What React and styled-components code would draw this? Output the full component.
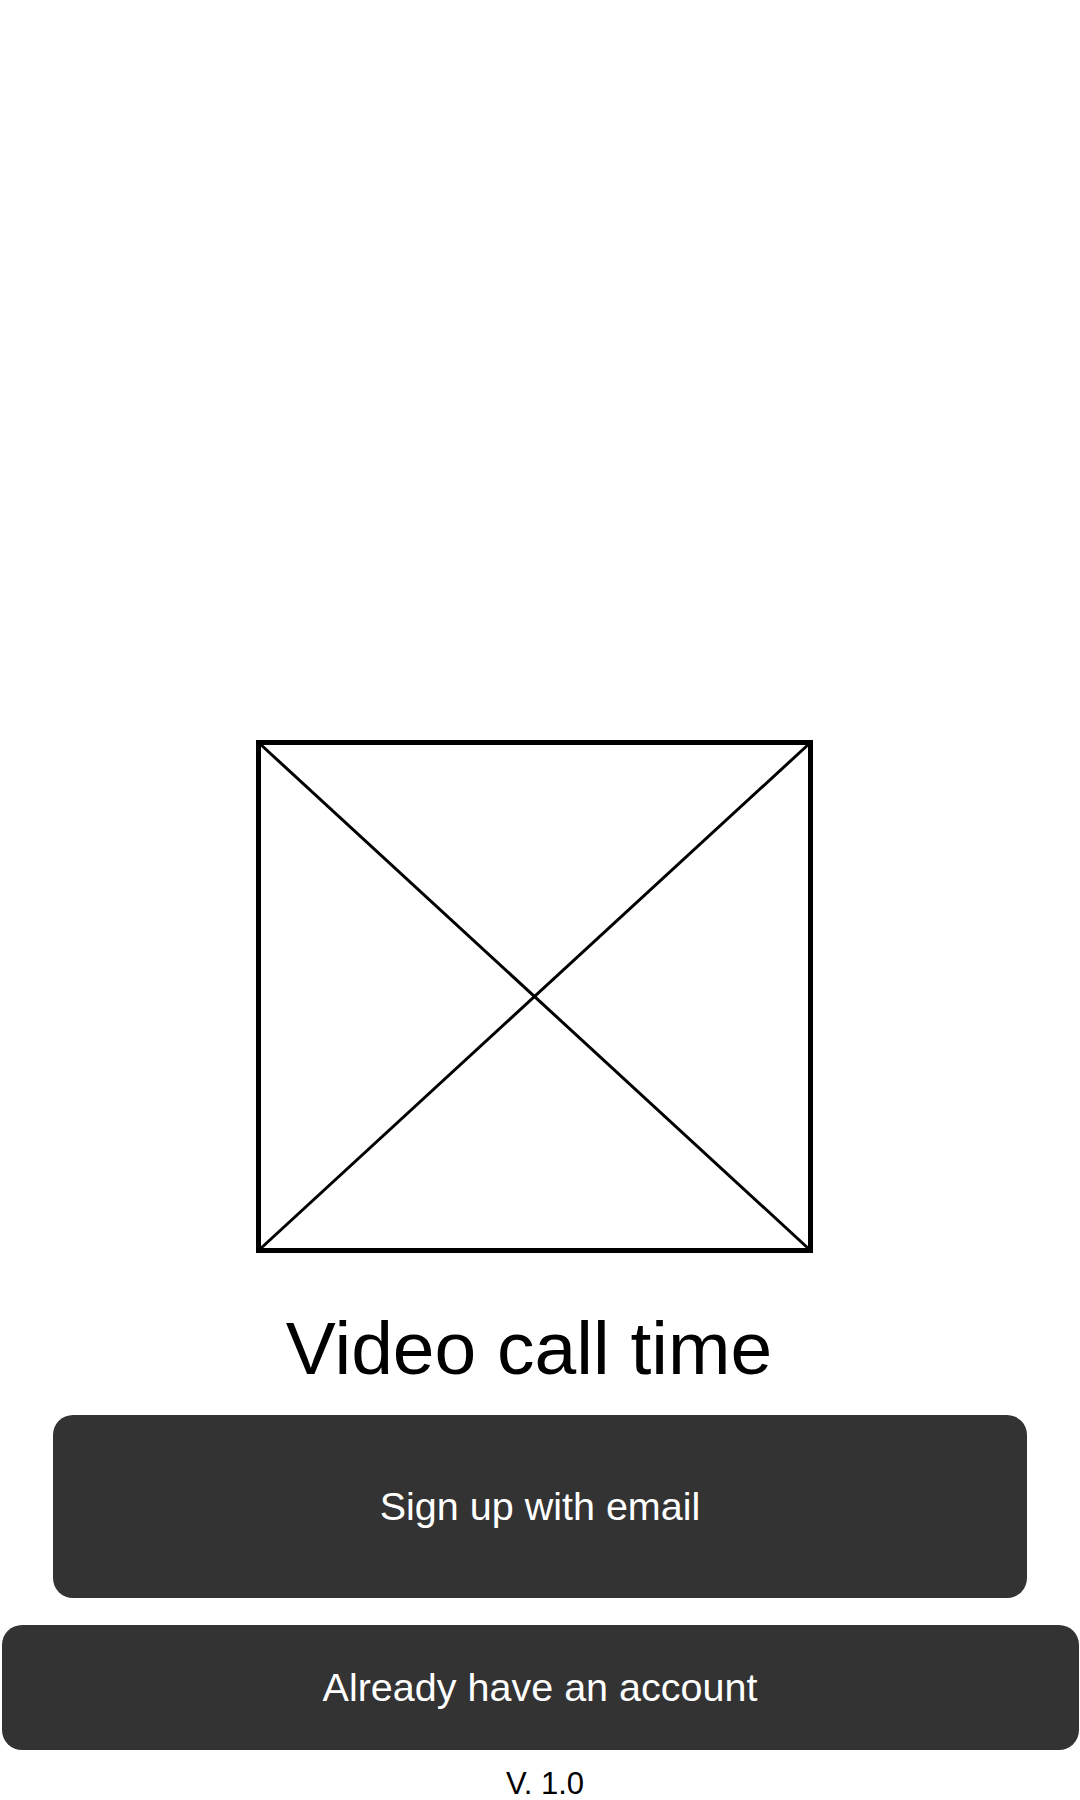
import styled, { createGlobalStyle } from 'styled-components';

const GlobalStyle = createGlobalStyle`
    *{
        box-sizing: border-box;
    }
    body{
        margin: 0;
        background: #ffffff;
        font-family: "Liberation Sans", Arial, sans-serif;
    }
`

export default function App() {
    return (
        <>
            <GlobalStyle />
            <Page>
                <Placeholder viewBox="0 0 557 513" aria-hidden="true">
                    <rect x="2.5" y="2.5" width="552" height="508" fill="none" stroke="#000" strokeWidth="5" />
                    <line x1="3" y1="3" x2="554" y2="510" stroke="#000" strokeWidth="3" />
                    <line x1="554" y1="3" x2="3" y2="510" stroke="#000" strokeWidth="3" />
                </Placeholder>
                <Title>Video call time</Title>
                <Button $width={974} $height={183}>Sign up with email</Button>
                <Button $width={1077} $height={125} $gap={27}>Already have an account</Button>
                <Version>V. 1.0</Version>
            </Page>
        </>
    )
}

const Page = styled.main`
    width: 1080px;
    height: 1800px;
    overflow: hidden;
    display: flex;
    flex-direction: column;
    align-items: center;
    padding-top: 740px;
`

const Placeholder = styled.svg`
    align-self: flex-start;
    margin-left: 256px;
    width: 557px;
    height: 513px;
    display: block;
    flex-shrink: 0;
`

const Title = styled.h1`
    margin: 55px 22px 0 0;
    font-size: 75px;
    line-height: 80px;
    font-weight: 400;
    color: #000;
`

const Button = styled.button`
    margin-top: ${p => p.$gap || 27}px;
    width: ${p => p.$width}px;
    height: ${p => p.$height}px;
    flex-shrink: 0;
    border: none;
    border-radius: 20px;
    background-color: #333333;
    color: #ffffff;
    font-family: "Liberation Sans", Arial, sans-serif;
    font-size: 39.5px;
    cursor: pointer;
`

const Version = styled.p`
    margin: 17px 0 0 10px;
    font-size: 31px;
    line-height: 34px;
    color: #000;
`
